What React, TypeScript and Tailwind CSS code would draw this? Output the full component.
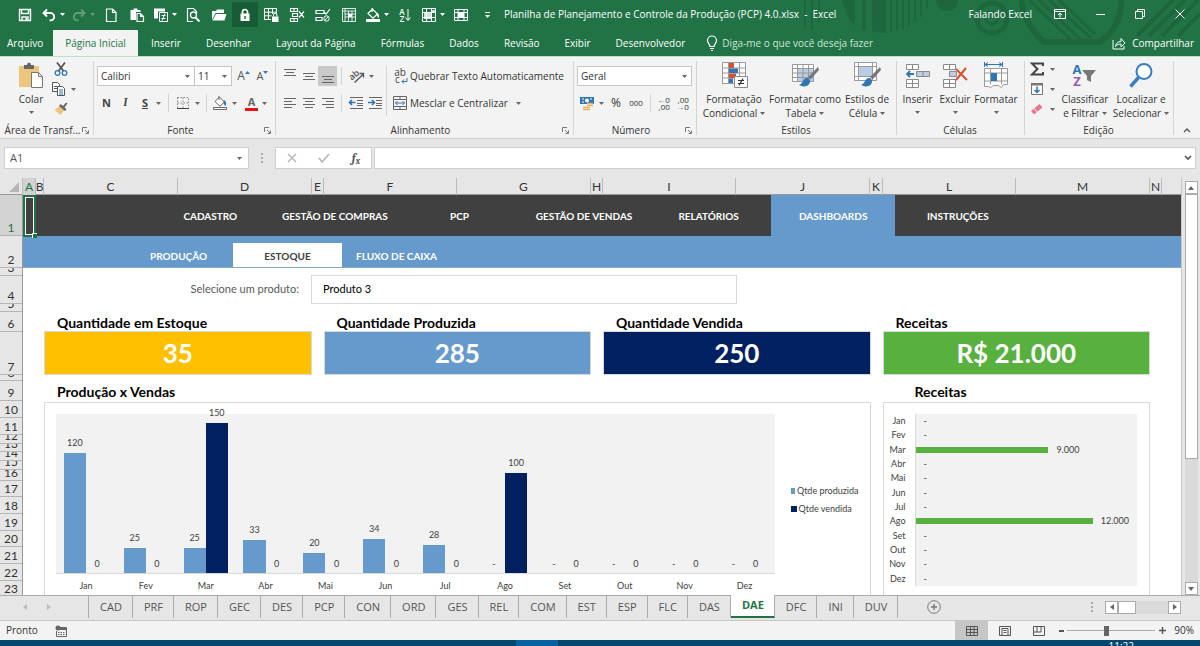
import React, { useState } from 'react';
import { clsx, type ClassValue } from 'clsx';
import { twMerge } from 'tailwind-merge';

function cn(...inputs: ClassValue[]) {
  return twMerge(clsx(inputs));
}

const RIBBON_TABS = [
  'Inserir', 'Desenhar', 'Layout da Página', 'Fórmulas', 'Dados',
  'Revisão', 'Exibir', 'Desenvolvedor'
];

const COLUMNS = ['A', 'B', 'C', 'D', 'E', 'F', 'G', 'H', 'I', 'J', 'K', 'L', 'M', 'N'];

const ROWS = [
  { n: 1, h: 41 }, { n: 2, h: 32 }, { n: 3, h: 8 }, { n: 4, h: 28 }, { n: 5, h: 8 },
  { n: 6, h: 20 }, { n: 7, h: 43 }, { n: 8, h: 6 }, { n: 9, h: 20 }, { n: 10, h: 17 },
  { n: 11, h: 17 }, { n: 12, h: 9 }, { n: 13, h: 8 }, { n: 14, h: 9 }, { n: 15, h: 9 },
  { n: 16, h: 11 }, { n: 17, h: 16 }, { n: 18, h: 17 }, { n: 19, h: 17 }, { n: 20, h: 16 },
  { n: 21, h: 17 }, { n: 22, h: 17 }, { n: 23, h: 16 }
];

const MENU = ['CADASTRO', 'GESTÃO DE COMPRAS', 'PCP', 'GESTÃO DE VENDAS', 'RELATÓRIOS', 'DASHBOARDS', 'INSTRUÇÕES'];
const SUBMENU = ['PRODUÇÃO', 'ESTOQUE', 'FLUXO DE CAIXA'];

const CARDS = [
  { title: 'Quantidade em Estoque', value: '35', color: 'bg-[#ffc000]' },
  { title: 'Quantidade Produzida', value: '285', color: 'bg-[#6699cc]' },
  { title: 'Quantidade Vendida', value: '250', color: 'bg-[#002060]' },
  { title: 'Receitas', value: 'R$ 21.000', color: 'bg-[#58b03f]' }
];

const MONTHS = [
  { name: 'Jan', made: 120, sold: 0, revenue: 0 },
  { name: 'Fev', made: 25, sold: 0, revenue: 0 },
  { name: 'Mar', made: 25, sold: 150, revenue: 9000 },
  { name: 'Abr', made: 33, sold: 0, revenue: 0 },
  { name: 'Mai', made: 20, sold: 0, revenue: 0 },
  { name: 'Jun', made: 34, sold: 0, revenue: 0 },
  { name: 'Jul', made: 28, sold: 0, revenue: 0 },
  { name: 'Ago', made: 0, sold: 100, revenue: 12000 },
  { name: 'Set', made: 0, sold: 0, revenue: 0 },
  { name: 'Out', made: 0, sold: 0, revenue: 0 },
  { name: 'Nov', made: 0, sold: 0, revenue: 0 },
  { name: 'Dez', made: 0, sold: 0, revenue: 0 }
];

const SHEETS = [
  'CAD', 'PRF', 'ROP', 'GEC', 'DES', 'PCP', 'CON', 'ORD', 'GES', 'REL',
  'COM', 'EST', 'ESP', 'FLC', 'DAS', 'DAE', 'DFC', 'INI', 'DUV'
];

/* ---------- Ícones ---------- */

type IconProps = { size?: number; className?: string; children?: React.ReactNode };

const Icon = ({ size = 16, className, children }: IconProps) => (
  <svg width={size} height={size} viewBox={`0 0 ${size} ${size}`} fill="none" stroke="currentColor" className={cn('shrink-0', className)} aria-hidden="true">
    {children}
  </svg>
);

const Caret = ({ className }: { className?: string }) => (
  <svg width="5" height="3" viewBox="0 0 5 3" className={cn('shrink-0 text-[#666]', className)} aria-hidden="true">
    <path d="M0 0h5L2.5 3z" fill="currentColor" />
  </svg>
);

const SaveIcon = () => (
  <Icon><path d="M2.5 2.5h11v11h-11zM4.5 2.5v4h7v-4M5 13.500v-3.500h6v3.500" strokeWidth="1.4" /><path d="M8.500 11h1.500v2h-1.500z" fill="currentColor" stroke="none" /></Icon>
);
const UndoIcon = () => (
  <Icon><path d="M6 2.500 2.500 6 6 9.500M3 6h6.500a3.700 3.700 0 0 1 0 7.400H8.500" strokeWidth="1.900" /></Icon>
);
const RedoIcon = () => (
  <Icon><path d="M10 2.500 13.500 6 10 9.500M13 6H6.500a3.700 3.700 0 0 0 0 7.400h1" strokeWidth="1.900" /></Icon>
);
const NewIcon = () => (
  <Icon><path d="M3.500 2h6l3.500 3.500v9H3.500zM9.500 2v3.500H13" strokeWidth="1.200" /></Icon>
);
const PasteIcon = () => (
  <Icon>
    <path d="M1.500 3h3V1.500h4V3h3v2H7v8H1.500z" fill="currentColor" stroke="none" />
    <path d="M8 6.500h3.500l3 3v5H8zM11.500 6.500v3h3" strokeWidth="1.200" />
  </Icon>
);
const PasteSpecialIcon = () => (
  <Icon>
    <path d="M1 1.500h11v3H5v7H1z" fill="currentColor" stroke="none" />
    <path d="M6.500 5.500h8v9h-8zM8.500 8.500h4M8.500 11.500h4M12 6.500l-3 7" />
  </Icon>
);
const PreviewIcon = () => (
  <Icon>
    <path d="M8 14.500H2.500v-13h6l3 3v2" strokeWidth="1.200" />
    <circle cx="8.500" cy="8" r="3" strokeWidth="1.300" /><path d="m10.500 10.500 4 4" strokeWidth="2" />
  </Icon>
);
const FolderIcon = () => (
  <Icon><path d="M1 13V4h4l1-1.500h7V6H4.500z" fill="currentColor" stroke="none" /><path d="M5 7h10.500l-2 6.500H1.500z" fill="currentColor" stroke="none" /></Icon>
);
const LockIcon = () => (
  <Icon>
    <path d="M5.500 7V5a2.500 2.500 0 0 1 5 0v2" strokeWidth="1.700" />
    <path d="M3.500 6.500h9V14h-9z" fill="currentColor" stroke="none" /><path d="M8 9v3" stroke="#185c37" strokeWidth="1.400" />
  </Icon>
);
const GridLockIcon = () => (
  <Icon>
    <path d="M8 12.500H1.500v-11h12V7M1.500 5.200h12M1.500 8.800h7M5.500 1.500v11M9.500 1.500V7" />
    <path d="M9 9.500h6.500V15H9z" fill="currentColor" stroke="none" /><path d="M10.500 9.500V8a1.700 1.700 0 0 1 3.400 0v1.500" />
  </Icon>
);
const DeleteRowsIcon = () => (
  <Icon><path d="M1.500 1.500h7v3h-7zM1.500 11.500h7v3h-7zM5 1.500v3M5 11.500v3M3.500 6.500h5v3h-5zM10 4.500l5 6M15 4.500l-5 6" strokeWidth="1.200" /></Icon>
);
const RulesIcon = () => (
  <Icon><path d="M1 3.500h8v3H1zM1 10.500h6v3H1zM9 5l2 2 4-5" strokeWidth="1.200" /><circle cx="11.500" cy="11.500" r="2.700" /><path d="m9.700 13.200 3.600-3.500" /></Icon>
);
const TableIcon = () => (
  <Icon><path d="M1.500 1.500h13v13h-13zM4 1.500V14.500M1.500 4h13M4 7h10.500M4 10h10.500M7.500 4v10.500M11 4v10.500" opacity=".85" /><path d="M7.500 7.500h3v2h-3z" fill="currentColor" /></Icon>
);
const BucketIcon = () => (
  <Icon>
    <path d="M3 6.500 7.500 2l5 5-4.500 4.200zM7 1v4" strokeWidth="1.200" />
    <path d="M12.500 6c2 1.500 2 4 1 5-.8-.5-1.500-2.500-1.500-4z" fill="currentColor" stroke="none" />
    <path d="M1 12h14v3H1z" fill="currentColor" stroke="none" />
  </Icon>
);
const DensityIcon = () => (
  <Icon>
    <path d="M1.500 1.500h13v13h-13zM1.500 5.500h13M1.500 10.500h13M5.500 1.500v13M10.500 1.500v13" />
    <path d="M3 5h7v7H3zM10 3h4v3h-4z" fill="currentColor" stroke="none" opacity=".8" />
  </Icon>
);
const FreezeIcon = () => (
  <Icon><path d="M1.500 2.500h13v11h-13zM1.500 5.500h13M1.500 10.500h13M5 2.500v11M11 2.500v11" /><path d="M5 5.500h6v5H5z" fill="currentColor" stroke="none" /></Icon>
);

const SplitGlyph = ({ top, bottom }: { top: string; bottom: string }) => (
  <span className="flex flex-col text-[8px] leading-[7px] font-semibold"><span>{top}</span><span>{bottom}</span></span>
);

const LinesIcon = ({ rows }: { rows: [number, number, number][] }) => (
  <Icon className="text-[#666]">
    {rows.map(([y, x1, x2]) => <path key={y} d={`M${x1} ${y + 0.5}H${x2}`} />)}
  </Icon>
);

const TitlePattern = () => (
  <svg className="absolute right-0 top-0 h-[56px] w-[400px] text-[#1d663e]" viewBox="0 0 400 56" fill="none" stroke="currentColor" aria-hidden="true">
    <path d="M5 0v28M12 0v30M19 0v22" strokeWidth="2" />
    <path d="M42 0h13v26Q47 18 42 0zM62 0h4v31l-4-2zM72 0h14v33q-8 0-14-2z" fill="currentColor" stroke="none" />
    <path d="M91 0v32M97 0v31M103 0v29M109 0v26M115 0v22M121 0v17M127 0v9" strokeWidth="2" />
    <circle cx="147" cy="0" r="11" fill="currentColor" stroke="none" />
    <circle cx="192" cy="18" r="15" strokeWidth="5" /><circle cx="192" cy="18" r="6" strokeWidth="3" />
    <path d="M222 0q0 22 22 42h56q22-16 21-42" strokeWidth="6" />
    <path d="m229 0 42 40M239 0l42 40M249 0l42 38M259 0l36 34" strokeWidth="3" />
    <path d="m337 36 36-36M349 36l36-36M362 36l36-36M378 36l22-22" strokeWidth="4" />
  </svg>
);

/* ---------- Barra de título ---------- */

const QuickButton = ({ label, active, split, faded, children }: { label: string; active?: boolean; split?: boolean; faded?: boolean; children: React.ReactNode }) => (
  <button
    type="button"
    aria-label={label}
    className={cn(
      'flex h-[25px] shrink-0 items-center justify-center',
      split ? 'w-[30px] gap-[3px]' : 'w-[26px]',
      active && 'bg-[#185c37]',
      faded && 'opacity-30'
    )}
  >
    {children}
    {split && <Caret className="text-white" />}
  </button>
);

const TitleBar = () => (
  <div className="relative flex h-[30px] items-start pt-[2px] pl-3">
    <QuickButton label="Salvar"><SaveIcon /></QuickButton>
    <QuickButton label="Desfazer" split><UndoIcon /></QuickButton>
    <QuickButton label="Refazer" split faded><RedoIcon /></QuickButton>
    <QuickButton label="Novo"><NewIcon /></QuickButton>
    <QuickButton label="Colar"><PasteIcon /></QuickButton>
    <QuickButton label="Colar especial" split><PasteSpecialIcon /></QuickButton>
    <QuickButton label="Visualizar impressão"><PreviewIcon /></QuickButton>
    <QuickButton label="Abrir"><FolderIcon /></QuickButton>
    <QuickButton label="Bloquear célula" active><LockIcon /></QuickButton>
    <QuickButton label="Proteger planilha"><GridLockIcon /></QuickButton>
    <QuickButton label="Excluir linhas"><DeleteRowsIcon /></QuickButton>
    <QuickButton label="Validação de dados"><RulesIcon /></QuickButton>
    <QuickButton label="Tabela"><TableIcon /></QuickButton>
    <QuickButton label="Cor de preenchimento" split><BucketIcon /></QuickButton>
    <QuickButton label="Classificar">
      <SplitGlyph top="A" bottom="Z" />
      <svg width="6" height="14" viewBox="0 0 6 14" fill="none" stroke="currentColor" aria-hidden="true"><path d="M3 1v11M.5 9.500 3 12.500l2.500-3" /></svg>
    </QuickButton>
    <QuickButton label="Formatação" split><DensityIcon /></QuickButton>
    <QuickButton label="Congelar painéis"><FreezeIcon /></QuickButton>
    <QuickButton label="Personalizar">
      <span className="flex flex-col items-center gap-[2px]"><span className="h-px w-[5px] bg-white" /><Caret className="text-white" /></span>
    </QuickButton>
    <div className="ml-1 flex-1 truncate leading-6">Planilha de Planejamento e Controle da Produção (PCP) 4.0.xlsx&nbsp; -&nbsp; Excel</div>
    <span className="mr-[8px] leading-6">Falando Excel</span>
    <button type="button" aria-label="Opções da faixa" className="flex h-6 w-[40px] items-center justify-center">
      <Icon size={12}><path d="M.5 1.500h11v9H.5zM.5 3.500h11M6 9.500v-4M4 7l2-2 2 2" /></Icon>
    </button>
    <button type="button" aria-label="Minimizar" className="flex h-6 w-[40px] items-center justify-center"><span className="h-px w-[9px] bg-white" /></button>
    <button type="button" aria-label="Restaurar" className="flex h-6 w-[40px] items-center justify-center">
      <Icon size={10}><path d="M.5 2.500h7v7h-7zM2.500 2.500v-2h7v7h-2" /></Icon>
    </button>
    <button type="button" aria-label="Fechar" className="flex h-6 w-[40px] items-center justify-center">
      <Icon size={10}><path d="m.5.5 9 9M9.500.5l-9 9" /></Icon>
    </button>
  </div>
);

const RibbonTabs = () => (
  <nav className="relative flex h-[26px] items-stretch gap-px">
    <button type="button" className="pr-[9px] pl-[7px]">Arquivo</button>
    <button type="button" className="bg-[#f3f3f3] px-3 text-[#217346]">Página Inicial</button>
    {RIBBON_TABS.map(t => <button type="button" key={t} className="px-3">{t}</button>)}
    <button type="button" className="ml-2 flex items-center gap-1 text-[#cfe5d8]">
      <svg width="12" height="16" viewBox="0 0 12 16" fill="none" stroke="#fff" className="shrink-0" aria-hidden="true">
        <path d="M4 11.500C4 9 1.500 8.500 1.500 5.500a4.500 4.500 0 0 1 9 0c0 3-2.500 3.500-2.500 6zM4 13.500h4M5 15.500h2" strokeWidth="1.200" />
      </svg>
      Diga-me o que você deseja fazer
    </button>
    <button type="button" className="ml-auto flex items-center gap-[6px] pr-[6px]">
      <Icon size={14}><path d="M1 4v9h11v-3M3.500 10.500C4 7 6 5.500 9 5.500V2.500l4 4.500-4 4V8C6.500 8 5 8.500 3.500 10.500z" /></Icon>
      Compartilhar
    </button>
  </nav>
);

/* ---------- Faixa de opções ---------- */

const Group = ({ label, launcher, className, children }: { label: string; launcher?: boolean; className: string; children: React.ReactNode }) => (
  <section className={cn('flex shrink-0 flex-col', className)}>
    <div className="flex flex-1">{children}</div>
    <div className="flex h-4 items-center pr-1 pl-[3px]">
      <span className="flex-1 text-center whitespace-nowrap">{label}</span>
      {launcher && (
        <button type="button" aria-label={`Mais opções de ${label}`}>
          <Icon size={7} className="text-[#777]"><path d="M.5 5V.5H5M3 3l3 3M6.500 3.500v3h-3" /></Icon>
        </button>
      )}
    </div>
  </section>
);

const Sep = ({ tall }: { tall?: boolean }) => <span className={cn('w-px shrink-0 bg-[#d4d4d4]', tall ? 'h-[74px] self-center' : 'h-[18px]')} />;

const Tool = ({ label, on, className, children }: { label: string; on?: boolean; className?: string; children: React.ReactNode }) => (
  <button type="button" aria-label={label} className={cn('flex h-5 min-w-[19px] shrink-0 items-center justify-center gap-1', on && 'bg-[#c9c9c9]', className)}>
    {children}
  </button>
);

const BigButton = ({ lines, caretInline, className, icon }: { lines: string[]; caretInline?: boolean; className?: string; icon: React.ReactNode }) => (
  <button type="button" className={cn('flex shrink-0 flex-col items-center pt-[4px] leading-[14px]', className)}>
    <span className="mb-[3px] flex h-7 items-center justify-center">{icon}</span>
    {lines.map((l, i) => (
      <span key={l} className="flex items-center gap-[3px] whitespace-nowrap">
        {l}{caretInline && i === lines.length - 1 && <Caret />}
      </span>
    ))}
    {!caretInline && <Caret className="mt-[5px]" />}
  </button>
);

const Dropdown = ({ label, value, className }: { label: string; value: string; className: string }) => (
  <div className={cn('relative flex h-5 items-center border border-[#c6c6c6] bg-white', className)}>
    <select aria-label={label} className="h-full w-full appearance-none bg-transparent pl-[3px] outline-none">
      <option>{value}</option>
    </select>
    <Caret className="pointer-events-none absolute right-1" />
  </div>
);

const CellsGlyph = ({ kind }: { kind: 'insert' | 'delete' }) => (
  <Icon size={26} className="text-[#8a8a8a]">
    <path d="M1.500 2.500h12v5h-12zM7.500 2.500v5M1.500 17.500h12v8h-12zM7.500 17.500v8M1.500 21.500h12" fill="#fff" />
    {kind === 'insert' ? (
      <>
        <path d="M11.500 9.500h13v5h-13zM18 9.500v5" fill="#b9cde4" />
        <path d="M9 12H2M5 9l-3 3 3 3" stroke="#2e75b6" strokeWidth="1.800" />
      </>
    ) : (
      <>
        <path d="M7.500 9.500h7v5h-7z" fill="#b9cde4" />
        <path d="m14 7 11 11M24 6 14 18" stroke="#d35230" strokeWidth="2" />
      </>
    )}
  </Icon>
);

const BrushOverlay = () => (
  <>
    <path d="m27 6-10 10 2.500 2.500L28 9z" fill="#777" stroke="none" />
    <path d="M17 17c-5-1-4 5-9 7 5 3 12 1 11-5z" fill="#2e75b6" stroke="none" />
  </>
);

const Ribbon = () => (
  <div className="flex h-[83px] items-stretch overflow-hidden border-t border-[#bfe0cc] border-b border-b-[#cfcfcf] bg-[#f3f3f3] text-[#333]">
    <Group label="Área de Transf..." launcher className="w-[93px]">
      <BigButton
        className="ml-[11px] w-[40px]"
        lines={['Colar']}
        icon={
          <Icon size={26}>
            <path d="M1 4h20v21H1z" fill="#ecc67e" stroke="none" />
            <path d="M6 7V3h3q0-2.500 2-2.500t2 2.500h3v4z" fill="#666" stroke="none" />
            <path d="M13.500 10.500h7l4 4v11h-11zM20.500 10.500v4h4" fill="#fff" stroke="#777" />
          </Icon>
        }
      />
      <div className="flex flex-col items-start pt-[2px]">
        <Tool label="Recortar">
          <Icon className="text-[#555]"><path d="M4 1.500 10.500 10M12 1.500 5.500 10" strokeWidth="1.800" /><circle cx="4.500" cy="12" r="2.300" stroke="#2e75b6" strokeWidth="1.300" /><circle cx="11.500" cy="12" r="2.300" stroke="#2e75b6" strokeWidth="1.300" /></Icon>
        </Tool>
        <Tool label="Copiar">
          <Icon className="text-[#555]"><path d="M1.500 1.500h5l2 2v7h-7zM3 5.500h3M3 7.500h3" fill="#fff" /><path d="M6.500 5.500h5l2 2v7h-7z" fill="#fff" /><path d="M8 9h4M8 11h4M8 13h4" stroke="#2e75b6" /></Icon>
          <Caret />
        </Tool>
        <Tool label="Pincel de formatação">
          <Icon><path d="m1.500 9 6 5 4-5-5-4z" fill="#ecc67e" stroke="none" /><path d="m6 5 6 5 1.500-2-2-1.500 3-4-1.500-1-3 3.500-2.500-2z" fill="#666" stroke="none" /></Icon>
        </Tool>
      </div>
    </Group>
    <Sep tall />
    <Group label="Fonte" launcher className="w-[181px]">
      <div className="flex flex-1 flex-col gap-[7px] pt-[9px] pl-[3px]">
        <div className="flex items-center">
          <Dropdown label="Fonte" value="Calibri" className="w-[98px]" />
          <Dropdown label="Tamanho da fonte" value="11" className="-ml-px w-[38px]" />
          <Tool label="Aumentar fonte" className="ml-[2px] gap-0 text-[12px] text-[#555]">A<Caret className="mb-2 rotate-180 text-[#2e75b6]" /></Tool>
          <Tool label="Diminuir fonte" className="gap-0 text-[11px] text-[#555]">A<Caret className="mb-2 text-[#2e75b6]" /></Tool>
        </div>
        <div className="flex items-center text-[11px] text-[#444]">
          <Tool label="Negrito" className="font-bold">N</Tool>
          <Tool label="Itálico" className="font-serif font-semibold italic">I</Tool>
          <Tool label="Sublinhado" className="w-[33px] font-bold"><span className="underline">S</span><Caret className="ml-1" /></Tool>
          <Sep />
          <Tool label="Bordas" className="w-[37px]">
            <Icon className="text-[#888]"><path d="M2.500 2.500h11v11M2.500 2.500v11M8 2.500v11M2.500 8h11" strokeDasharray="1.500 1.500" /><path d="M2 13.500h12" stroke="#444" /></Icon>
            <Caret />
          </Tool>
          <Sep />
          <Tool label="Preenchimento" className="w-[34px] text-[#666]">
            <Icon><path d="M3 6.500 7.500 2l5 5-4.500 4.200zM7 1v4" fill="#fff" /><path d="M12 5c2.500 1.500 2.500 4 1.500 6-.8-.5-2-2.500-2-4z" fill="#2e75b6" stroke="none" /><path d="M1.500 12.500h13v2h-13z" fill="#fff" /></Icon>
            <Caret />
          </Tool>
          <Tool label="Cor da fonte" className="w-[30px] font-bold text-[#666]">
            <span className="border-b-[3px] border-[#e8111b] px-[3px] leading-3">A</span><Caret />
          </Tool>
        </div>
      </div>
    </Group>
    <Sep tall />
    <Group label="Alinhamento" launcher className="w-[297px]">
      <div className="flex flex-col gap-[7px] pt-[9px] pl-1">
        <div className="flex items-center">
          <Tool label="Alinhar em cima"><LinesIcon rows={[[1, 2, 14], [4, 4, 12], [7, 2, 14]]} /></Tool>
          <Tool label="Alinhar no meio"><LinesIcon rows={[[5, 2, 14], [8, 4, 12], [11, 2, 14]]} /></Tool>
          <Tool label="Alinhar embaixo" on><LinesIcon rows={[[8, 2, 14], [11, 4, 12], [14, 2, 14]]} /></Tool>
          <span className="w-1" />
          <Sep />
          <Tool label="Orientação" className="w-[38px]">
            <Icon className="text-[#555]">
              <text x="0" y="11" fontSize="9" fontWeight="600" fill="currentColor" stroke="none" transform="rotate(-40 4 8)">ab</text>
              <path d="m5.500 14.500 8.500-8M14.500 9.500v-4h-4" strokeWidth="1.300" />
            </Icon>
            <Caret />
          </Tool>
        </div>
        <div className="flex items-center">
          <Tool label="Alinhar à esquerda"><LinesIcon rows={[[3, 2, 14], [6, 2, 10], [9, 2, 14], [12, 2, 10]]} /></Tool>
          <Tool label="Centralizar"><LinesIcon rows={[[3, 2, 14], [6, 4, 12], [9, 2, 14], [12, 4, 12]]} /></Tool>
          <Tool label="Alinhar à direita"><LinesIcon rows={[[3, 2, 14], [6, 6, 14], [9, 2, 14], [12, 6, 14]]} /></Tool>
          <span className="w-1" />
          <Sep />
          <span className="w-1" />
          <Tool label="Diminuir recuo">
            <Icon className="text-[#666]"><path d="M2 2.500h13M9 5.500h6M9 8.500h6M9 10.500h6M2 13.500h13" /><path d="M7.500 7.500H1M4 5 1.500 7.500 4 10" stroke="#2e75b6" strokeWidth="1.600" /></Icon>
          </Tool>
          <Tool label="Aumentar recuo">
            <Icon className="text-[#666]"><path d="M2 2.500h13M9 5.500h6M9 8.500h6M9 10.500h6M2 13.500h13" /><path d="M1 7.500h6.500M5 5l2.500 2.500L5 10" stroke="#2e75b6" strokeWidth="1.600" /></Icon>
          </Tool>
        </div>
      </div>
      <span className="mt-[9px] ml-[2px] h-[50px] w-px bg-[#d4d4d4]" />
      <div className="flex flex-col gap-[7px] pt-[9px] pl-[5px]">
        <button type="button" className="flex h-5 items-center gap-[2px] whitespace-nowrap">
          <span className="relative flex w-4 flex-col items-center text-[10px] leading-[7px] text-[#444]">
            <span>ab</span><span className="self-start pl-[3px]">c</span>
            <svg width="7" height="6" viewBox="0 0 7 6" fill="none" stroke="#2e75b6" className="absolute right-0 -bottom-px" aria-hidden="true"><path d="M6 0v3.500H1M3 1.500l-2 2 2 2" /></svg>
          </span>
          Quebrar Texto Automaticamente
        </button>
        <button type="button" className="flex h-5 items-center gap-[2px] whitespace-nowrap">
          <Icon className="text-[#666]"><path d="M1.500 1.500h13v13h-13zM1.500 4.500h13M1.500 11.500h13M8 1.500v3M8 11.500v3" /><path d="M3.500 8h9M5.500 6l-2 2 2 2M10.500 6l2 2-2 2" stroke="#2e75b6" /></Icon>
          Mesclar e Centralizar<Caret className="ml-[6px]" />
        </button>
      </div>
    </Group>
    <Sep tall />
    <Group label="Número" launcher className="w-[122px]">
      <div className="flex flex-1 flex-col gap-[7px] pt-[9px] pr-1 pl-[3px]">
        <Dropdown label="Formato de número" value="Geral" className="w-full" />
        <div className="flex items-center">
          <Tool label="Moeda" className="w-[29px]">
            <Icon><path d="M1 2h14v7H1z" fill="#2e75b6" stroke="none" /><path d="M3 4h2M11 4h2M3 7h2" stroke="#fff" /><circle cx="8" cy="5.500" r="2" fill="#fff" stroke="none" /><path d="M8 8.500h6M8 10.500h6M4 12.500h7M4 14.500h7" stroke="#e2b566" strokeWidth="1.500" /></Icon>
            <Caret />
          </Tool>
          <Tool label="Porcentagem" className="w-[20px] text-xs">%</Tool>
          <Tool label="Separador de milhares" className="w-[20px] text-[8px]">000</Tool>
          <span className="w-1" />
          <Sep />
          <span className="w-[3px]" />
          <Tool label="Aumentar casas decimais">
            <span className="flex flex-col items-end text-[8px] leading-[7px]"><span><b className="text-[#2e75b6]">←</b>0</span><span>,00</span></span>
          </Tool>
          <Tool label="Diminuir casas decimais">
            <span className="flex flex-col items-end text-[8px] leading-[7px]"><span>,00</span><span><b className="text-[#2e75b6]">→</b>0</span></span>
          </Tool>
        </div>
      </div>
    </Group>
    <Sep tall />
    <Group label="Estilos" className="w-[199px]">
      <BigButton
        className="w-[74px]"
        lines={['Formatação', 'Condicional']}
        caretInline
        icon={
          <Icon size={28} className="text-[#999]">
            <path d="M2.500 1.500h23v21h-23zM2.500 7h23M2.500 12h23M2.500 17h23M8.500 1.500v21M19.500 1.500v21" fill="#fff" />
            <path d="M9 2h5v5H9zM9 12.500h7v4.500H9z" fill="#d35230" stroke="none" /><path d="M9 7.500h9V12H9zM9 17.500h4V22H9z" fill="#2e75b6" stroke="none" />
            <path d="M14.500 15.500h13v11h-13z" fill="#fff" stroke="#888" /><path d="M18 19.500h6M18 22.500h6M23 17.500l-4 7" stroke="#333" strokeWidth="1.200" />
          </Icon>
        }
      />
      <BigButton
        className="w-[68px]"
        lines={['Formatar como', 'Tabela']}
        caretInline
        icon={
          <Icon size={28} className="text-[#999]">
            <path d="M1.500 3.500h21v17h-21z" fill="#fff" /><path d="M7 8h15v12H7z" fill="#b9cde4" stroke="none" />
            <path d="M1.500 7.500h21M1.500 12h21M1.500 16.500h21M6.500 3.500v17M12 3.500v17M17.500 3.500v17" /><BrushOverlay />
          </Icon>
        }
      />
      <BigButton
        className="w-[56px]"
        lines={['Estilos de', 'Célula']}
        caretInline
        icon={
          <Icon size={28} className="text-[#999]">
            <path d="M1.500 1.500h22v18h-22zM1.500 5.500h22M1.500 15.500h22M5.500 1.500v18M19.500 1.500v18" fill="#fff" /><path d="M6 6h13v9H6z" fill="#b9cde4" stroke="none" /><BrushOverlay />
          </Icon>
        }
      />
    </Group>
    <Sep tall />
    <Group label="Células" className="w-[127px]">
      <BigButton className="ml-[2px] w-[37px]" lines={['Inserir']} icon={<CellsGlyph kind="insert" />} />
      <BigButton className="w-[38px]" lines={['Excluir']} icon={<CellsGlyph kind="delete" />} />
      <BigButton
        className="w-[44px]"
        lines={['Formatar']}
        icon={
          <Icon size={26} className="text-[#999]">
            <path d="M1.500 6.500h23v16h-4l-2 3-3-2h-5l-3 2-2-1h-4zM1.500 11h23M1.500 19h23M7.500 6.500v16M18.500 6.500v16" fill="#fff" />
            <path d="M8 11h6v8H8z" fill="#2e75b6" stroke="none" />
            <path d="M1.500 0v5M19.500 0v5M2 2.500h17M5 .5l-3 2 3 2M16 .5l3 2-3 2" stroke="#2e75b6" />
          </Icon>
        }
      />
    </Group>
    <Sep tall />
    <Group label="Edição" className="w-[148px]">
      <div className="flex flex-col items-start pt-[2px] pl-1">
        <Tool label="Soma" className="gap-[5px]">
          <Icon className="text-[#444]"><path d="M14 5V2.500H3L8.500 8 3 13.500h11V11" strokeWidth="2" /></Icon><Caret />
        </Tool>
        <Tool label="Preencher" className="gap-[5px]">
          <Icon className="text-[#777]"><path d="M2.500 2.500h11v11h-11z" fill="#fff" /><path d="M2 2h12v2.500H2z" fill="currentColor" stroke="none" /><path d="M8 5.500v6M5.500 9 8 11.500 10.500 9" stroke="#2e75b6" strokeWidth="1.500" /></Icon><Caret />
        </Tool>
        <Tool label="Limpar" className="gap-[5px]">
          <Icon><path d="m2 10 3 3.500 8.500-7-3-3.500z" fill="#e8798d" stroke="none" /><path d="m5 7.500 3 3.500" stroke="#f3f3f3" /></Icon><Caret />
        </Tool>
      </div>
      <BigButton
        className="ml-[3px] w-[54px]"
        lines={['Classificar', 'e Filtrar']}
        caretInline
        icon={
          <span className="flex items-center">
            <span className="flex flex-col text-[13px] leading-3 font-bold"><span className="text-[#2e75b6]">A</span><span className="text-[#9b59b6]">Z</span></span>
            <Icon><path d="M1 3h14l-5 6v6l-4-2V9z" fill="#777" stroke="none" /></Icon>
          </span>
        }
      />
      <BigButton
        className="w-[58px]"
        lines={['Localizar e', 'Selecionar']}
        caretInline
        icon={<Icon size={26} className="text-[#3b7dc4]"><circle cx="16" cy="9.500" r="7.500" fill="#fff" strokeWidth="2" /><path d="m10.500 15.500-8 9" strokeWidth="3.500" /></Icon>}
      />
    </Group>
    <Sep tall />
    <button type="button" aria-label="Recolher faixa" className="ml-auto self-end pr-[9px] pb-[4px]">
      <Icon size={8} className="text-[#555]"><path d="m1 6 3-3 3 3" strokeWidth="1.300" /></Icon>
    </button>
  </div>
);

const FormulaBar = () => (
  <div className="flex h-[39px] items-start bg-[#e6e6e6] pt-2 pr-1 pl-1">
    <div className="relative flex h-[22px] w-[245px] items-center border border-[#cfcfcf] bg-white">
      <input aria-label="Caixa de nome" defaultValue="A1" className="w-full bg-transparent pl-[5px] text-[11px] text-[#555] outline-none" />
      <Caret className="absolute right-[6px]" />
    </div>
    <span className="flex h-[22px] w-[26px] flex-col items-center justify-center gap-[2px]">
      <i className="size-[2px] bg-[#aaa]" /><i className="size-[2px] bg-[#aaa]" /><i className="size-[2px] bg-[#aaa]" />
    </span>
    <div className="flex h-[22px] w-[97px] items-center justify-around border border-[#cfcfcf] bg-white text-[#b5b5b5]">
      <button type="button" aria-label="Cancelar"><Icon size={10}><path d="m1 1 8 8M9 1 1 9" strokeWidth="1.400" /></Icon></button>
      <button type="button" aria-label="Inserir"><Icon size={12}><path d="m1 6 3 4 7-8" strokeWidth="1.600" /></Icon></button>
      <button type="button" aria-label="Inserir função" className="font-serif text-xs font-semibold text-[#555] italic">f<sub className="text-[9px]">x</sub></button>
    </div>
    <div className="relative ml-[2px] flex h-[22px] flex-1 items-center border border-[#cfcfcf] bg-white">
      <input aria-label="Barra de fórmulas" className="w-full bg-transparent px-1 outline-none" />
      <Icon size={8} className="absolute right-[3px] text-[#555]"><path d="m1 2 3 3 3-3" strokeWidth="1.600" /></Icon>
    </div>
  </div>
);

/* ---------- Planilha ---------- */

const ColumnHeaders = () => (
  <div className="grid h-[17px] shrink-0 grid-cols-[23px_13px_8px_134fr_134fr_12px_133fr_134fr_12px_133fr_134fr_13px_133fr_134fr_12px_19px] border-b border-[#9a9a9a] bg-[#e6e6e6] font-[Lato,'Liberation_Sans',sans-serif] text-xs leading-[17px] text-[#333]">
    <span className="flex items-end justify-end border-r border-[#bbb] p-[3px]">
      <svg width="10" height="10" viewBox="0 0 10 10" className="text-[#b5b5b5]" aria-hidden="true"><path d="M10 0v10H0z" fill="currentColor" /></svg>
    </span>
    {COLUMNS.map(c => (
      <span key={c} className={cn('flex justify-center border-r border-[#bbb]', c === 'A' && 'bg-[#d2d2d2] text-[#217346]')}>{c}</span>
    ))}
  </div>
);

const RowHeaders = () => (
  <div className="w-[23px] shrink-0 border-r border-[#9a9a9a] bg-[#e6e6e6] font-[Lato,'Liberation_Sans',sans-serif] text-xs text-[#333]">
    {ROWS.map(r => (
      <div
        key={r.n}
        style={{ height: r.h }}
        className={cn('flex items-end justify-center overflow-hidden border-b border-[#b5b5b5] leading-[14px]', r.n === 1 && 'bg-[#d2d2d2] text-[#217346]')}
      >
        {r.n}
      </div>
    ))}
  </div>
);

const ProductionChart = () => (
  <div className="flex h-[210px] border border-[#d9d9d9] pt-[11px] pr-[11px] pl-[11px]">
    <div className="flex-1">
      <div className="flex h-[160px] border-b border-[#d9d9d9] bg-[#f2f2f2]">
        {MONTHS.map(m => (
          <div key={m.name} className="flex flex-1 items-end justify-center">
            {[m.made, m.sold].map((v, i) => (
              <div key={i} className="flex w-[37%] flex-col items-center">
                <span className={cn('leading-[11px]', v === 0 ? 'pb-1' : 'pb-[5px]')}>{v === 0 && i === 0 ? '-' : v}</span>
                <div className={cn('w-full', i === 0 ? 'bg-[#6699cc]' : 'bg-[#002060]')} style={{ height: v }} />
              </div>
            ))}
          </div>
        ))}
      </div>
      <div className="flex pt-[6px]">
        {MONTHS.map(m => <span key={m.name} className="flex-1 text-center">{m.name}</span>)}
      </div>
    </div>
    <ul className="ml-4 flex w-[68px] flex-col gap-[6px] pt-[71px] whitespace-nowrap">
      <li className="flex items-center gap-[2px]"><i className="size-[6px] bg-[#6699cc]" />Qtde produzida</li>
      <li className="flex items-center gap-[2px]"><i className="size-[6px] bg-[#002060]" />Qtde vendida</li>
    </ul>
  </div>
);

const RevenueChart = () => (
  <div className="flex h-[210px] border border-[#d9d9d9] pt-[11px] pr-3">
    <div className="flex h-[172px] w-[31px] flex-col pr-[9px] text-right">
      {MONTHS.map(m => <span key={m.name} className="flex flex-1 items-center justify-end">{m.name}</span>)}
    </div>
    <div className="flex h-[172px] flex-1 flex-col border-l border-[#d9d9d9] bg-[#f2f2f2]">
      {MONTHS.map(m => (
        <div key={m.name} className="flex flex-1 items-center">
          <div className="h-[6px] bg-[#58b03f]" style={{ width: `${(m.revenue / 15000) * 100}%` }} />
          <span className="pl-2">{m.revenue ? m.revenue.toLocaleString('pt-BR') : '-'}</span>
        </div>
      ))}
    </div>
  </div>
);

const Dashboard = () => (
  <main className="relative min-w-0 flex-1 overflow-hidden bg-white font-[Lato,'Liberation_Sans',sans-serif]">
    <nav className="flex h-[41px] bg-[#404040] pr-[161px] pl-[125px] text-[10px] font-bold text-white">
      {MENU.map(m => (
        <a key={m} href="#" className={cn('flex flex-1 items-center justify-center pt-px whitespace-nowrap', m === 'DASHBOARDS' && 'bg-[#6699cc]')}>{m}</a>
      ))}
    </nav>
    <nav className="flex h-[32px] items-end border-b border-[#8aa9c9] bg-[#6699cc] pl-[101px] text-[10px] font-bold text-white">
      {SUBMENU.map(m => (
        <a key={m} href="#" className={cn('flex h-6 w-[109px] items-center justify-center pt-[2px] whitespace-nowrap', m === 'ESTOQUE' && 'bg-white text-[#404040]')}>{m}</a>
      ))}
    </nav>
    {/* Célula ativa */}
    <div className="absolute top-0 left-0 h-[42px] w-[13px] border-2 border-[#217346] outline -outline-offset-[3px] outline-white">
      <span className="absolute -right-[3px] -bottom-[3px] size-[5px] border-t border-l border-white bg-[#217346]" />
    </div>

    <div className="pr-[31px] pl-[21px]">
      <div className="flex h-[36px] items-end">
        <label htmlFor="produto" className="w-[267px] pr-3 text-right text-[11px] leading-[30px] text-[#595959]">Selecione um produto:</label>
        <select id="produto" className="h-[29px] w-[426px] appearance-none border border-[#d9d9d9] bg-white pl-[11px] text-[11px] text-black">
          <option>Produto 3</option>
        </select>
      </div>

      <div className="grid grid-cols-4 gap-3 pt-[10px]">
        {CARDS.map(c => (
          <section key={c.title}>
            <h2 className="pl-[13px] text-[14px] leading-[17px] font-bold text-black">{c.title}</h2>
            <p className={cn('flex h-[44px] items-center justify-center border border-[#d9d9d9] pt-px text-[26px] font-bold text-white', c.color)}>{c.value}</p>
          </section>
        ))}
      </div>

      <div className="grid grid-cols-4 gap-3 pt-2 text-[9px] leading-3 text-[#404040]">
        <section className="col-span-3">
          <h2 className="pb-px pl-[13px] text-[14px] leading-[18px] font-bold text-black">Produção x Vendas</h2>
          <ProductionChart />
        </section>
        <section>
          <h2 className="pb-px pl-8 text-[14px] leading-[18px] font-bold text-black">Receitas</h2>
          <RevenueChart />
        </section>
      </div>
    </div>
  </main>
);

const ScrollArrow = ({ label, d }: { label: string; d: string }) => (
  <button type="button" aria-label={label} className="flex size-[13px] shrink-0 items-center justify-center border border-[#ababab] bg-white text-[#666]">
    <svg width="6" height="6" viewBox="0 0 6 6" aria-hidden="true"><path d={d} fill="currentColor" /></svg>
  </button>
);

const SheetTabs = ({ active, onSelect }: { active: string; onSelect: (s: string) => void }) => (
  <div className="flex h-[25px] shrink-0 items-start border-t border-[#ababab] bg-[#e6e6e6] text-[11px] text-[#555]">
    <div className="flex h-[22px] w-[88px] shrink-0 items-center gap-5 pl-[23px] text-[#bbb]">
      <svg width="4" height="6" viewBox="0 0 4 6" aria-hidden="true"><path d="M4 0v6L0 3z" fill="currentColor" /></svg>
      <svg width="4" height="6" viewBox="0 0 4 6" aria-hidden="true"><path d="M0 0v6l4-3z" fill="currentColor" /></svg>
    </div>
    {SHEETS.map((s, i) => (
      <button
        type="button"
        key={s}
        onClick={() => onSelect(s)}
        className={cn(
          'h-[22px] shrink-0 border-r border-[#ababab] pr-[10px] pl-[11px]',
          i === 0 && 'border-l',
          s === active && '-mt-px h-[23px] border-b-2 border-b-[#217346] bg-white font-bold text-[#217346]'
        )}
      >
        {s}
      </button>
    ))}
    <button type="button" aria-label="Nova planilha" className="ml-[29px] flex h-[22px] items-center">
      <Icon size={14} className="text-[#777]"><circle cx="7" cy="7" r="6.300" /><path d="M7 4v6M4 7h6" strokeWidth="1.400" /></Icon>
    </button>
    <div className="ml-auto flex h-[22px] shrink-0 items-center pr-[19px]">
      <span className="mr-3 flex flex-col gap-[2px]"><i className="size-[2px] bg-[#aaa]" /><i className="size-[2px] bg-[#aaa]" /><i className="size-[2px] bg-[#aaa]" /></span>
      <ScrollArrow label="Rolar para a esquerda" d="M5 0v6L1 3z" />
      <span className="h-[13px] w-[18px] border border-[#ababab] bg-white" />
      <span className="h-[13px] w-8 bg-[#dadada]" />
      <ScrollArrow label="Rolar para a direita" d="M1 0v6l4-3z" />
    </div>
  </div>
);

const StatusBar = () => (
  <footer className="flex h-[20px] shrink-0 items-center border-t border-[#c6c6c6] bg-[#f3f3f3] pr-[6px] pl-[6px] text-[#333]">
    <span>Pronto</span>
    <Icon size={12} className="ml-[17px] text-[#666]"><path d="M4.500 2.500h7v9h-10V6" /><circle cx="3" cy="3" r="2.500" fill="currentColor" stroke="none" /><path d="M5 3h7v2H5z" fill="currentColor" stroke="none" /><path d="M3 7.500h7M3 9.500h7" strokeDasharray="1.500 1" /></Icon>
    <div className="ml-auto flex h-full items-center">
      <button type="button" aria-label="Normal" className="flex h-full w-[33px] items-center justify-center bg-[#c6c6c6] text-[#555]">
        <Icon size={12}><path d="M.5 1.500h11v9H.5zM.5 4.500h11M.5 7.500h11M4.500 1.500v9M8 1.500v9" /></Icon>
      </button>
      <button type="button" aria-label="Layout da página" className="flex h-full w-[34px] items-center justify-center text-[#555]">
        <Icon size={12}><path d="M.5 1.500h11v9H.5zM3 3.500h6v7H3zM4.500 5.500h3M4.500 7.500h3" /></Icon>
      </button>
      <button type="button" aria-label="Quebra de página" className="flex h-full w-[33px] items-center justify-center text-[#555]">
        <Icon size={12}><path d="M.5 1.500h11v9H.5zM4 1.500v5.500h4V1.500M.5 7h3.500" /></Icon>
      </button>
      <button type="button" aria-label="Diminuir zoom" className="ml-1 flex h-full w-2 items-center"><span className="h-[2px] w-[5px] bg-[#555]" /></button>
      <input
        type="range"
        aria-label="Zoom"
        min={10}
        max={190}
        defaultValue={90}
        className="h-[13px] w-[88px] appearance-none bg-[linear-gradient(#aaa,#aaa)] bg-[length:100%_1px] bg-center bg-no-repeat [&::-webkit-slider-thumb]:h-[10px] [&::-webkit-slider-thumb]:w-[5px] [&::-webkit-slider-thumb]:appearance-none [&::-webkit-slider-thumb]:bg-[#666]"
      />
      <button type="button" aria-label="Aumentar zoom" className="mr-2 ml-1"><Icon size={7} className="text-[#555]"><path d="M3.500 0v7M0 3.500h7" strokeWidth="1.400" /></Icon></button>
      <span>90%</span>
    </div>
  </footer>
);

export default function App() {
  const [active, setActive] = useState('DAE');

  return (
    <div className="flex h-screen flex-col overflow-hidden bg-[#e6e6e6] font-['Open_Sans','Noto_Sans',sans-serif] text-[10px]">
      <header className="relative shrink-0 bg-[#217346] text-white">
        <TitlePattern />
        <TitleBar />
        <RibbonTabs />
      </header>
      <div className="shrink-0">
        <Ribbon />
        <FormulaBar />
      </div>

      <div className="flex min-h-0 flex-1">
        <div className="flex min-w-0 flex-1 flex-col">
          <ColumnHeaders />
          <div className="flex min-h-0 flex-1 overflow-hidden">
            <RowHeaders />
            <Dashboard />
          </div>
        </div>
        <div className="flex w-[19px] shrink-0 flex-col items-center border-l border-[#c6c6c6] pt-[3px]">
          <ScrollArrow label="Rolar para cima" d="M0 5h6L3 1z" />
          <span className="w-[13px] flex-[66] border border-[#ababab] bg-white" />
          <span className="w-[13px] flex-[31] bg-[#dadada]" />
          <ScrollArrow label="Rolar para baixo" d="M0 1h6L3 5z" />
        </div>
      </div>

      <SheetTabs active={active} onSelect={setActive} />
      <StatusBar />

      {/* Barra de tarefas */}
      <div className="flex h-[6px] shrink-0 overflow-hidden bg-[#03466e]">
        <span className="ml-[43%] w-[42px] bg-[#0563a0]" />
        <span className="mr-[66px] ml-auto leading-[12px] text-white">11:22</span>
      </div>
    </div>
  );
}
